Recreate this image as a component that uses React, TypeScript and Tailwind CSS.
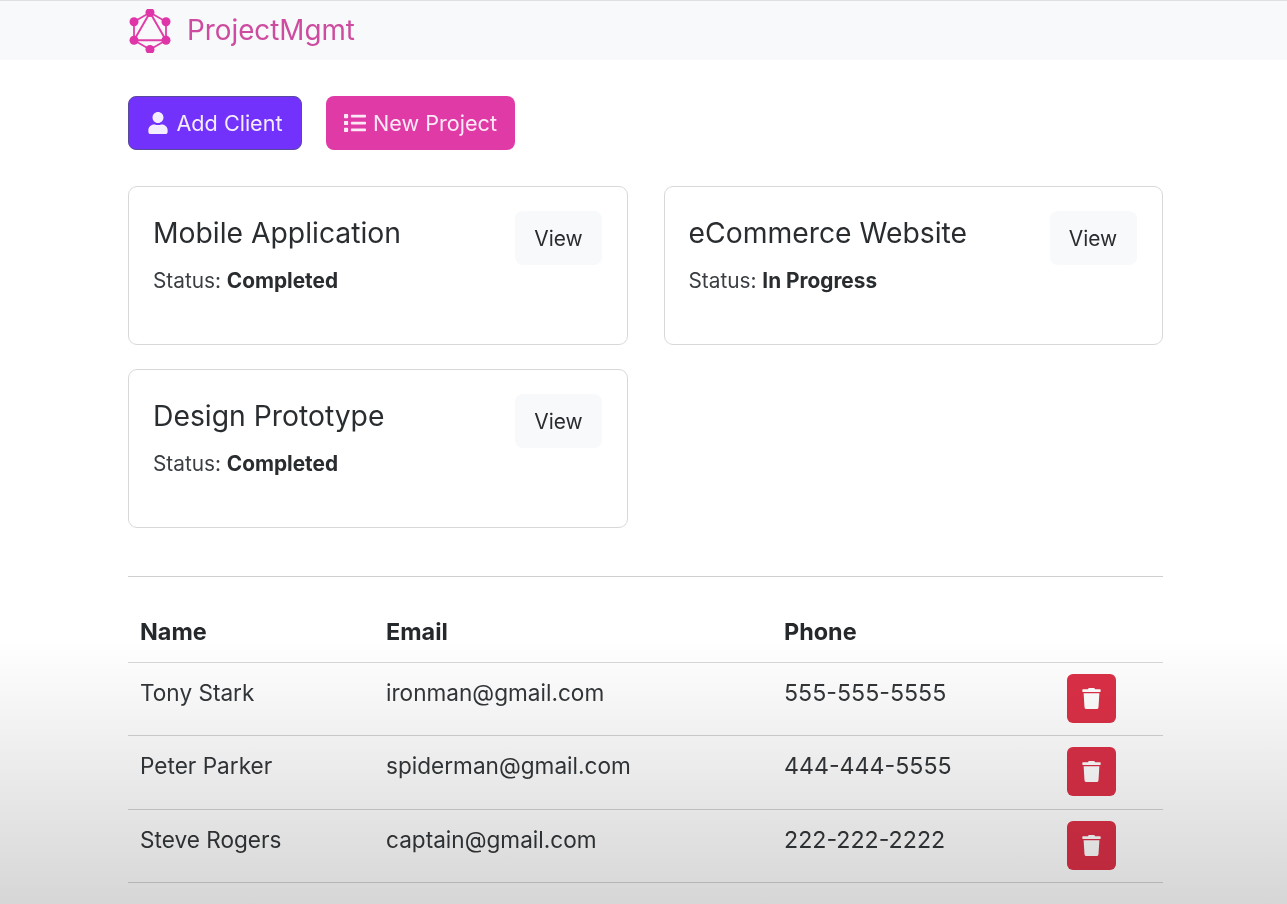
import { FaUser, FaList, FaTrash } from "react-icons/fa";

const projects = [
  { name: "Mobile Application", status: "Completed" },
  { name: "eCommerce Website", status: "In Progress" },
  { name: "Design Prototype", status: "Completed" },
];

const clients = [
  { name: "Tony Stark", email: "ironman@gmail.com", phone: "555-555-5555" },
  { name: "Peter Parker", email: "spiderman@gmail.com", phone: "444-444-5555" },
  { name: "Steve Rogers", email: "captain@gmail.com", phone: "222-222-2222" },
];

function Logo() {
  const pts = [
    [22, 3.5],
    [38, 12.8],
    [38, 31.2],
    [22, 40.5],
    [6, 31.2],
    [6, 12.8],
  ];
  return (
    <svg width="44" height="44" viewBox="0 0 44 44" className="shrink-0">
      <polygon points="22,3.5 38,12.8 38,31.2 22,40.5 6,31.2 6,12.8" fill="none" stroke="#e03fa8" strokeWidth="1.8" />
      <polygon points="22,3.5 38,31.2 6,31.2" fill="none" stroke="#e03fa8" strokeWidth="2" />
      {pts.map(([x, y], i) => (
        <circle key={i} cx={x} cy={y} r="4.5" fill="#e035a8" />
      ))}
    </svg>
  );
}

function ProjectCard({ name, status }: { name: string; status: string }) {
  return (
    <div className="h-[159px] rounded-[9px] border border-[#d8d8d8] bg-white px-6 pt-6">
      <div className="flex items-start justify-between">
        <h5 className="text-[28.3px] leading-[46px] text-[#2a2d30] -mt-[1px]">{name}</h5>
        <button className="w-[87px] h-[54px] mr-[1px] pt-[2px] rounded-[8px] bg-[#f8f9fa] text-[20.9px] text-[#2a2d30]">View</button>
      </div>
      <p className="text-[20.8px] leading-[30px] text-[#3a3e42] mt-[1px]">
        Status: <strong className="font-bold text-[#2a2d30]">{status}</strong>
      </p>
    </div>
  );
}

export default function App() {
  return (
    <div className="relative h-[904px] overflow-hidden bg-white font-['Inter',_'Liberation_Sans',_sans-serif] text-[#212529]">
      <div className="blur-[0.4px]">
        <nav className="h-[60px] border-t border-[#dfe0e3] bg-[#f8f9fb] pl-[128px]">
          <div className="flex h-full items-center">
            <Logo />
            <span className="ml-[15px] text-[27.8px] text-[#cd4c9f]">ProjectMgmt</span>
          </div>
        </nav>

        <main className="ml-[128px] w-[1035px]">
          <div className="mt-[36px] flex gap-6">
            <button className="flex h-[54px] w-[174px] items-center justify-center gap-[7px] rounded-[8px] border border-[#5a4a9e] bg-[#7232fb] text-[21.6px] text-[#f3edff]">
              <FaUser className="h-[22px] w-[22px]" />
              <span>Add Client</span>
            </button>
            <button className="flex h-[54px] w-[189px] items-center justify-center gap-[7px] rounded-[8px] bg-[#e03aa6] text-[21.6px] text-[#fbe9f5]">
              <FaList className="h-[22px] w-[22px]" />
              <span>New Project</span>
            </button>
          </div>

          <div className="mt-[36px] grid grid-cols-[500px_499px] gap-x-[35.5px] gap-y-[24px]">
            {projects.map((p) => (
              <ProjectCard key={p.name} {...p} />
            ))}
          </div>

          <hr className="mt-[48px] border-t border-[#cfcfcf]" />

          <table className="mt-[23px] w-full table-fixed text-[22.6px] text-[#33373a]">
            <colgroup>
              <col className="w-[246px]" />
              <col className="w-[398px]" />
              <col className="w-[283px]" />
              <col />
            </colgroup>
            <thead>
              <tr className="h-[62px] border-b border-[#d8d8d8] text-left text-[23.4px]">
                <th className="px-3 pt-[2px] font-bold text-[#26292c]">Name</th>
                <th className="px-3 pt-[2px] font-bold text-[#26292c]">Email</th>
                <th className="px-3 pt-[2px] font-bold text-[#26292c]">Phone</th>
                <th />
              </tr>
            </thead>
            <tbody>
              {clients.map((c) => (
                <tr key={c.email} className="h-[73.6px] border-b border-[#d4d4d4]">
                  <td className="px-3 align-top pt-[12px] leading-[36px]">{c.name}</td>
                  <td className="px-3 align-top pt-[12px] leading-[36px]">{c.email}</td>
                  <td className="px-3 align-top pt-[12px] leading-[36px] text-[23.2px]">{c.phone}</td>
                  <td className="px-3 align-top pt-[11px]">
                    <button className="flex h-[49px] w-[49px] items-center justify-center rounded-[6px] bg-[#dc3047] text-white">
                      <FaTrash className="h-[21px] w-[21px]" />
                    </button>
                  </td>
                </tr>
              ))}
            </tbody>
          </table>
        </main>
      </div>

      <div className="pointer-events-none absolute inset-x-0 bottom-0 h-[264px] bg-gradient-to-b from-black/0 to-black/[0.16]" />
    </div>
  );
}
